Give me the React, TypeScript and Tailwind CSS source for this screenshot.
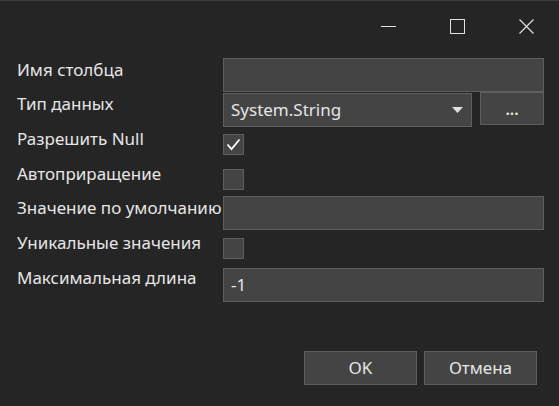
const font = { fontFamily: '"Segoe UI", "Noto Sans", "Open Sans", sans-serif' }

function Label({ children }: { children: string }) {
  return (
    <div className="w-[206px] shrink-0 overflow-hidden whitespace-nowrap text-[17px] leading-[23px] text-[#e6e6e6]">
      {children}
    </div>
  )
}

function TextBox({ value = '' }: { value?: string }) {
  return (
    <div className="flex h-[34px] w-[321px] items-center border border-[#5e5e5e] bg-[#444444] px-[7px] text-[17px] text-[#e6e6e6]">
      {value}
    </div>
  )
}

function CheckBox({ checked = false }: { checked?: boolean }) {
  return (
    <div className="mt-[7px] flex h-[21px] w-[21px] items-center justify-center border border-[#5e5e5e] bg-[#444444]">
      {checked && (
        <svg width="15" height="15" viewBox="0 0 15 15">
          <path d="M1.5 7.5 L5.5 12 L13.5 2.5" fill="none" stroke="#ffffff" strokeWidth="1.8" />
        </svg>
      )}
    </div>
  )
}

export default function App() {
  return (
    <div className="flex h-[406px] w-[559px] flex-col border-t border-[#3c3c3c] bg-[#252525]" style={font}>
      {/* title bar: caption buttons 69px wide, flush right */}
      <div className="flex h-[57px] shrink-0 justify-end">
        <div className="flex h-[50px] w-[69px] items-center justify-center pl-[3px]">
          <div className="h-px w-[15px] bg-[#e0e0e0]" />
        </div>
        <div className="flex h-[50px] w-[69px] items-center justify-center pl-[3px]">
          <div className="h-[15px] w-[15px] border border-[#e0e0e0]" />
        </div>
        <div className="flex h-[50px] w-[69px] items-center justify-center pl-[3px]">
          <svg width="15" height="15" viewBox="0 0 15 15">
            <path d="M0.5 0.5 L14.5 14.5 M14.5 0.5 L0.5 14.5" stroke="#e0e0e0" strokeWidth="1.2" />
          </svg>
        </div>
      </div>

      <div className="flex flex-col pl-[17px]">
        <div className="flex h-[34px]">
          <Label>Имя столбца</Label>
          <div className="self-start"><TextBox /></div>
        </div>

        <div className="flex h-[35px]">
          <Label>Тип данных</Label>
          <div className="mt-px flex h-[34px] w-[249px] items-center justify-between border border-[#5e5e5e] bg-[#444444] pl-[7px] pr-[7px] text-[17px] text-[#e6e6e6]">
            <span>System.String</span>
            <svg width="11" height="6" viewBox="0 0 11 6" className="mr-[1px]">
              <path d="M0 0 L11 0 L5.5 6 Z" fill="#e0e0e0" />
            </svg>
          </div>
          <div className="ml-[8px] flex h-[33px] w-[64px] items-center justify-center border border-[#5e5e5e] bg-[#444444] text-[16px] font-semibold text-[#e6e6e6]">
            ...
          </div>
        </div>

        <div className="flex h-[35px]">
          <Label>Разрешить Null</Label>
          <CheckBox checked />
        </div>

        <div className="flex h-[34px]">
          <Label>Автоприращение</Label>
          <CheckBox />
        </div>

        <div className="flex h-[35px]">
          <Label>Значение по умолчанию</Label>
          <div className="self-start"><TextBox /></div>
        </div>

        <div className="flex h-[35px]">
          <Label>Уникальные значения</Label>
          <CheckBox />
        </div>

        <div className="flex h-[36px]">
          <Label>Максимальная длина</Label>
          <div className="mt-[2px]"><TextBox value="-1" /></div>
        </div>
      </div>

      <div className="mt-auto mb-[21px] flex justify-end gap-[7px] pr-[22px]">
        <button className="h-[34px] w-[113px] border border-[#5e5e5e] bg-[#444444] text-[17px] text-[#e6e6e6]">OK</button>
        <button className="h-[34px] w-[113px] border border-[#5e5e5e] bg-[#444444] text-[17px] text-[#e6e6e6]">Отмена</button>
      </div>
    </div>
  )
}
